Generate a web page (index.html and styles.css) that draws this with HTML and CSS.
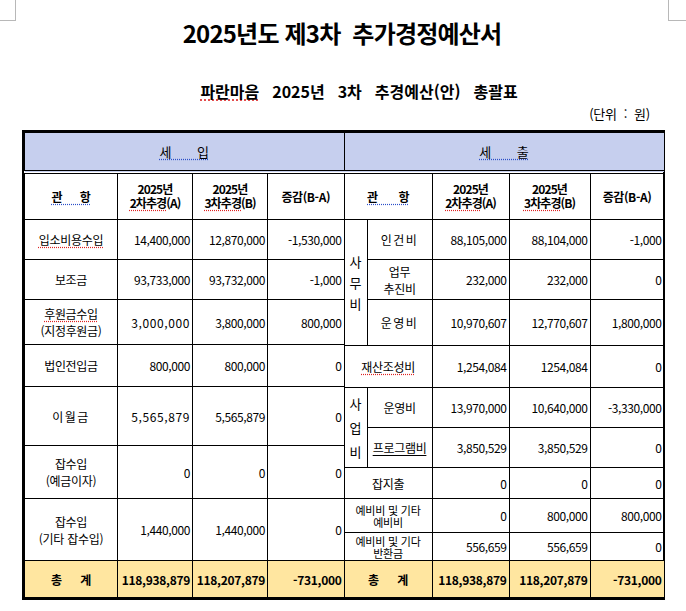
FILE: index.html
```html
<!DOCTYPE html>
<html lang="ko">
<head>
<meta charset="utf-8">
<title>2025년도 제3차 추가경정예산서</title>
<link rel="stylesheet" href="styles.css">
</head>
<body>
<header class="top">
  <span class="mark mark-l"></span>
  <h1 class="title">2025년도 제3차&nbsp; 추가경정예산서</h1>
  <span class="mark mark-r"></span>
</header>
<p class="subtitle"><span class="sp">파란마음</span>&nbsp; 2025년&nbsp; 3차&nbsp; 추경예산(안)&nbsp; 총괄표</p>
<p class="unit">(단위&nbsp; :&nbsp; 원)</p>

<div class="sheet">
  <table class="tbl tbl-in">
    <colgroup><col class="w93"><col class="w75"><col class="w75"><col class="w76"></colgroup>
    <tr class="r-band"><th colspan="4" class="band"><span class="gr">세&nbsp;&nbsp;&nbsp;&nbsp;&nbsp;&nbsp;&nbsp;입</span></th></tr>
    <tr class="r-head">
      <th class="hd"><span class="gr">관&nbsp;&nbsp;&nbsp;&nbsp;&nbsp;&nbsp;항</span></th>
      <th class="hd2">2025년<br><span class="sp">2차추경</span>(A)</th>
      <th class="hd2">2025년<br><span class="sp">3차추경</span>(B)</th>
      <th class="hd">증감(B-A)</th>
    </tr>
    <tr class="h40"><td class="lbl"><span class="sp">입소비용수입</span></td><td class="num">14,400,000</td><td class="num">12,870,000</td><td class="num">-1,530,000</td></tr>
    <tr class="h40"><td class="lbl">보조금</td><td class="num">93,733,000</td><td class="num">93,732,000</td><td class="num">-1,000</td></tr>
    <tr class="h45"><td class="lbl two"><span class="sp">후원금수입</span><br>(지정후원금)</td><td class="num wide">3,000,000</td><td class="num">3,800,000</td><td class="num">800,000</td></tr>
    <tr class="h42"><td class="lbl">법인전입금</td><td class="num">800,000</td><td class="num">800,000</td><td class="num">0</td></tr>
    <tr class="h59"><td class="lbl ls">이월금</td><td class="num wide">5,565,879</td><td class="num">5,565,879</td><td class="num">0</td></tr>
    <tr class="h53"><td class="lbl two">잡수입<br>(예금이자)</td><td class="num">0</td><td class="num">0</td><td class="num">0</td></tr>
    <tr class="h62"><td class="lbl two">잡수입<br>(기타 잡수입)</td><td class="num">1,440,000</td><td class="num">1,440,000</td><td class="num">0</td></tr>
    <tr class="h37 total"><td class="lbl">총&nbsp;&nbsp;&nbsp;&nbsp;&nbsp;&nbsp;계</td><td class="num">118,938,879</td><td class="num">118,207,879</td><td class="num">-731,000</td></tr>
  </table>

  <table class="tbl tbl-out">
    <colgroup><col class="w23"><col class="w65"><col class="w77"><col class="w81"><col class="w74"></colgroup>
    <tr class="r-band"><th colspan="5" class="band"><span class="gr">세&nbsp;&nbsp;&nbsp;&nbsp;&nbsp;&nbsp;&nbsp;출</span></th></tr>
    <tr class="r-head">
      <th colspan="2" class="hd"><span class="gr">관&nbsp;&nbsp;&nbsp;&nbsp;&nbsp;&nbsp;&nbsp;항</span></th>
      <th class="hd2">2025년<br><span class="sp">2차추경</span>(A)</th>
      <th class="hd2">2025년<br><span class="sp">3차추경</span>(B)</th>
      <th class="hd">증감(B-A)</th>
    </tr>
    <tr class="h40"><td rowspan="3" class="vert">사<br>무<br>비</td><td class="lbl ls">인건비</td><td class="num">88,105,000</td><td class="num">88,104,000</td><td class="num">-1,000</td></tr>
    <tr class="h40"><td class="lbl two">업무<br>추진비</td><td class="num">232,000</td><td class="num">232,000</td><td class="num">0</td></tr>
    <tr class="h46"><td class="lbl ls">운영비</td><td class="num">10,970,607</td><td class="num">12,770,607</td><td class="num">1,800,000</td></tr>
    <tr class="h42"><td colspan="2" class="lbl"><span class="sp">재산조성비</span></td><td class="num">1,254,084</td><td class="num">1254,084</td><td class="num">0</td></tr>
    <tr class="h40"><td rowspan="2" class="vert vert-b">사<br>업<br>비</td><td class="lbl">운영비</td><td class="num">13,970,000</td><td class="num">10,640,000</td><td class="num">-3,330,000</td></tr>
    <tr class="h40"><td class="lbl"><span class="ul">프로그램비</span></td><td class="num">3,850,529</td><td class="num">3,850,529</td><td class="num">0</td></tr>
    <tr class="h31"><td colspan="2" class="lbl">잡지출</td><td class="num">0</td><td class="num">0</td><td class="num">0</td></tr>
    <tr class="h34"><td colspan="2" class="lbl small">예비비 및 기타<br>예비비</td><td class="num">0</td><td class="num">800,000</td><td class="num">800,000</td></tr>
    <tr class="h28"><td colspan="2" class="lbl small">예비비 및 기다<br>반환금</td><td class="num">556,659</td><td class="num">556,659</td><td class="num">0</td></tr>
    <tr class="h37 total"><td colspan="2" class="lbl">총&nbsp;&nbsp;&nbsp;&nbsp;&nbsp;&nbsp;계</td><td class="num">118,938,879</td><td class="num">118,207,879</td><td class="num">-731,000</td></tr>
  </table>
</div>
</body>
</html>
```

FILE: styles.css
```css
* { box-sizing: border-box; }

body {
  margin: 0;
  font-family: "Noto Sans CJK KR", "Noto Sans", sans-serif;
  color: #000;
  background: #fff;
}

/* top area */
.top {
  display: flex;
  align-items: flex-start;
  height: 81px;
}
.mark {
  display: block;
  height: 21px;
  border-bottom: 1px solid #b8b8b8;
}
.mark-l { width: 16px; border-right: 1px solid #b8b8b8; }
.mark-r { width: 18px; border-left: 1px solid #b8b8b8; }

.title {
  flex: 1;
  margin: 18px 0 0;
  text-align: center;
  font-size: 24px;
  line-height: 30px;
  font-weight: 700;
  letter-spacing: -0.8px;
}

.subtitle {
  margin: 0;
  padding-left: 32px;
  text-align: center;
  font-size: 16px;
  line-height: 20px;
  font-weight: 700;
  letter-spacing: 0;
  word-spacing: 2px;
}

.unit {
  margin: 5px 0 0;
  padding-right: 36px;
  text-align: right;
  font-size: 13px;
  line-height: 16px;
  letter-spacing: -0.2px;
}

/* spell / grammar marks */
.sp { text-decoration: underline dotted #d22; text-underline-offset: 2px; }
.gr { text-decoration: underline dotted #2b4fc9; text-underline-offset: 2px; }
.ul { text-decoration: underline; text-underline-offset: 2px; }

/* sheet */
.sheet {
  display: flex;
  margin: 8px 0 0 22px;
  width: 643px;
  border: 2px solid #000;
}

.tbl {
  border-collapse: collapse;
  table-layout: fixed;
}
.tbl-in { width: 319px; }
.tbl-out { width: 320px; }

.w93 { width: 93px; }
.w75 { width: 75px; }
.w76 { width: 76px; }
.w23 { width: 23px; }
.w65 { width: 65px; }
.w77 { width: 77px; }
.w81 { width: 81px; }
.w74 { width: 74px; }

.tbl th, .tbl td {
  border: 1px solid #000;
  padding: 0;
  font-size: 12px;
  line-height: 15px;
  vertical-align: middle;
}
.tbl-in th:last-child, .tbl-in td:last-child { border-right: 0; }

.r-band { height: 39px; }
.r-head { height: 48px; }
.h28 { height: 28px; }
.h31 { height: 31px; }
.h34 { height: 34px; }
.h37 { height: 37px; }
.h40 { height: 40px; }
.h42 { height: 42px; }
.h45 { height: 45px; }
.h46 { height: 46px; }
.h53 { height: 53px; }
.h59 { height: 59px; }
.h62 { height: 62px; }

.tbl th.band {
  background: #c6cfee;
  font-weight: 400;
  font-size: 13px;
  border-bottom: 4px double #000;
}

.hd {
  font-weight: 700;
  font-size: 12px;
  letter-spacing: -0.4px;
}
.tbl th.hd2 {
  font-weight: 700;
  font-size: 12px;
  line-height: 14px;
  letter-spacing: -0.9px;
}

.lbl {
  text-align: center;
  letter-spacing: -0.3px;
}
.lbl.ls { letter-spacing: 1.5px; }
.tbl td.two { line-height: 17px; }
.tbl td.small {
  font-size: 11px;
  line-height: 12px;
  letter-spacing: -0.2px;
}

.tbl td.num {
  text-align: right;
  padding-right: 2px;
  letter-spacing: -0.4px;
}
.tbl td.wide { letter-spacing: 0.6px; }

.tbl td.vert {
  text-align: center;
  font-size: 13px;
  line-height: 21px;
}
.tbl td.vert-b { line-height: 24px; }

.total td {
  background: #ffe6a0;
  font-weight: 700;
}
.tbl .total td.num { letter-spacing: -0.3px; }
```
